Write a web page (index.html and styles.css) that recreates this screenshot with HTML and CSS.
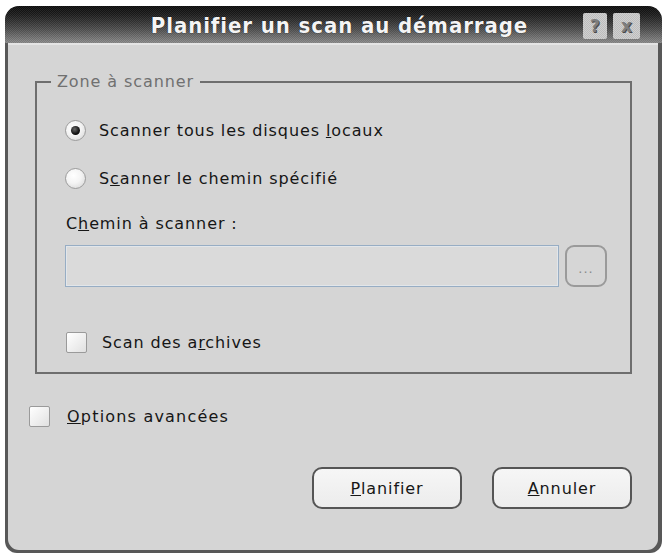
FILE: index.html
```html
<!DOCTYPE html>
<html lang="fr">
<head>
<meta charset="utf-8">
<title>Planifier un scan au démarrage</title>
<link rel="stylesheet" href="styles.css">
</head>
<body>
<div class="window">
  <div class="titlebar">
    <span class="title">Planifier un scan au démarrage</span>
    <div class="tb-btns">
      <span class="tb-btn help">?</span>
      <span class="tb-btn close">x</span>
    </div>
  </div>
  <div class="client">
    <fieldset class="group">
      <legend class="group-label">Zone à scanner</legend>
      <label class="option-row first"><span class="radio checked"></span><span>Scanner tous les disques <u>l</u>ocaux</span></label>
      <label class="option-row second"><span class="radio"></span><span>S<u>c</u>anner le chemin spécifié</span></label>
      <div class="path-label">C<u>h</u>emin à scanner :</div>
      <div class="path-row">
        <div class="path-input"></div>
        <span class="browse-btn">...</span>
      </div>
      <label class="option-row archives"><span class="checkbox"></span><span>Scan des a<u>r</u>chives</span></label>
    </fieldset>
    <label class="option-row advanced"><span class="checkbox"></span><span><u>O</u>ptions avancées</span></label>
    <div class="actions">
      <span class="btn btn-plan"><u>P</u>lanifier</span>
      <span class="btn btn-cancel"><u>A</u>nnuler</span>
    </div>
  </div>
</div>
</body>
</html>
```

FILE: styles.css
```css
* { box-sizing: border-box; }
html, body { margin: 0; background: #ffffff; }
body {
  width: 662px;
  height: 557px;
  padding: 6px 0 0 5px;
  font-family: "DejaVu Sans", "Liberation Sans", sans-serif;
  font-size: 16px;
  letter-spacing: 0.9px;
  color: #161616;
  overflow: hidden;
}
.window {
  width: 657px;
  height: 547px;
  background: #585858;
  border-radius: 14px 14px 12px 12px;
  display: flex;
  flex-direction: column;
  overflow: hidden;
}
.titlebar {
  height: 37px;
  flex: none;
  display: grid;
  align-items: center;
  background:
    repeating-conic-gradient(rgba(255,255,255,0.07) 0 25%, rgba(0,0,0,0.07) 0 50%) 0 0 / 2px 2px,
    linear-gradient(#0c0c0c 0%, #1e1e1e 25%, #4a4a4a 60%, #8a8a8a 100%);
  border-radius: 14px 14px 0 0;
}
.title {
  grid-area: 1 / 1;
  justify-self: center;
  padding-left: 12px;
  font-family: "DejaVu Sans Condensed", "DejaVu Sans", sans-serif;
  font-stretch: condensed;
  font-weight: bold;
  font-size: 22px;
  color: #f4f4f4;
  letter-spacing: 0.9px;
  text-shadow: 0 0 1px #000;
  margin-top: 2px;
}
.tb-btns {
  grid-area: 1 / 1;
  justify-self: end;
  display: flex;
  gap: 6px;
  margin-right: 22px;
  margin-top: 3px;
  letter-spacing: 0;
}
.tb-btn {
  height: 26px;
  display: flex;
  align-items: center;
  justify-content: center;
  background:
    repeating-conic-gradient(rgba(255,255,255,0.12) 0 25%, rgba(0,0,0,0.06) 0 50%) 0 0 / 2px 2px,
    #c9c9c9;
  border-radius: 2px;
  font-family: "DejaVu Sans", sans-serif;
  font-weight: bold;
  font-size: 17px;
  color: #7e7e7e;
  text-shadow: 1px 1px 0 #4a4a4a;
}
.tb-btn.help { width: 24px; }
.tb-btn.close { width: 27px; }
.client {
  flex: 1;
  margin: 0 4px 3px 3px;
  background: #d5d5d5;
  border-top: 2px solid #e4e4e4;
  border-radius: 0 0 11px 11px;
  padding: 27px 26px 0 27px;
  display: flex;
  flex-direction: column;
}
.group {
  margin: 0;
  border: 2px solid #6e6e6e;
  padding: 27px 23px 18px 28px;
  min-width: 0;
  display: flex;
  flex-direction: column;
}
.group-label {
  margin-left: -14px;
  padding: 0 6px;
  font-size: 16px;
  line-height: 19px;
  color: #707070;
}
.option-row {
  display: flex;
  align-items: center;
  height: 24px;
  gap: 13px;
  white-space: nowrap;
}
.option-row.second { margin-top: 24px; }
.radio {
  width: 21px;
  height: 21px;
  border-radius: 50%;
  border: 1px solid #9c9c9c;
  background: radial-gradient(circle at 40% 35%, #ffffff 0%, #f4f4f4 45%, #d2d2d2 100%);
  display: flex;
  align-items: center;
  justify-content: center;
  flex: none;
}
.radio.checked::after {
  content: "";
  width: 9px;
  height: 9px;
  border-radius: 50%;
  background: radial-gradient(circle at 40% 35%, #6a6a6a 0%, #111 60%, #000 100%);
}
.path-label {
  margin-top: 24px;
  line-height: 20px;
  height: 20px;
  padding-left: 1px;
}
.path-row {
  margin-top: 11px;
  display: flex;
  gap: 6px;
  height: 42px;
}
.path-input {
  flex: 1;
  border: 1px solid #97adc4;
  box-shadow: inset 0 0 0 1px #e2e6ea;
  background: #dadada;
}
.browse-btn {
  width: 42px;
  height: 42px;
  border: 2px solid #9a9a9a;
  border-radius: 9px;
  background: #d6d6d6;
  display: flex;
  align-items: center;
  justify-content: center;
  color: #8a8a8a;
  font-size: 13px;
  padding-top: 4px;
  letter-spacing: 1px;
}
.option-row.archives {
  margin-top: 43px;
  padding-left: 1px;
  gap: 15px;
}
.checkbox {
  width: 21px;
  height: 21px;
  border: 1px solid #9a9a9a;
  border-radius: 2px;
  background: linear-gradient(135deg, #ffffff 0%, #f0f0f0 50%, #e0e0e0 100%);
  flex: none;
}
.option-row.advanced {
  margin-top: 30px;
  margin-left: -6px;
  gap: 17px;
  letter-spacing: 1.2px;
}
.actions {
  margin-top: 39px;
  display: flex;
  justify-content: flex-end;
  gap: 30px;
}
.btn {
  height: 42px;
  border: 2px solid #555;
  border-radius: 10px;
  background: linear-gradient(#f6f6f6, #ececec);
  display: flex;
  align-items: center;
  justify-content: center;
  font-size: 16px;
  color: #161616;
}
.btn-plan { width: 150px; }
.btn-cancel { width: 140px; }
```
